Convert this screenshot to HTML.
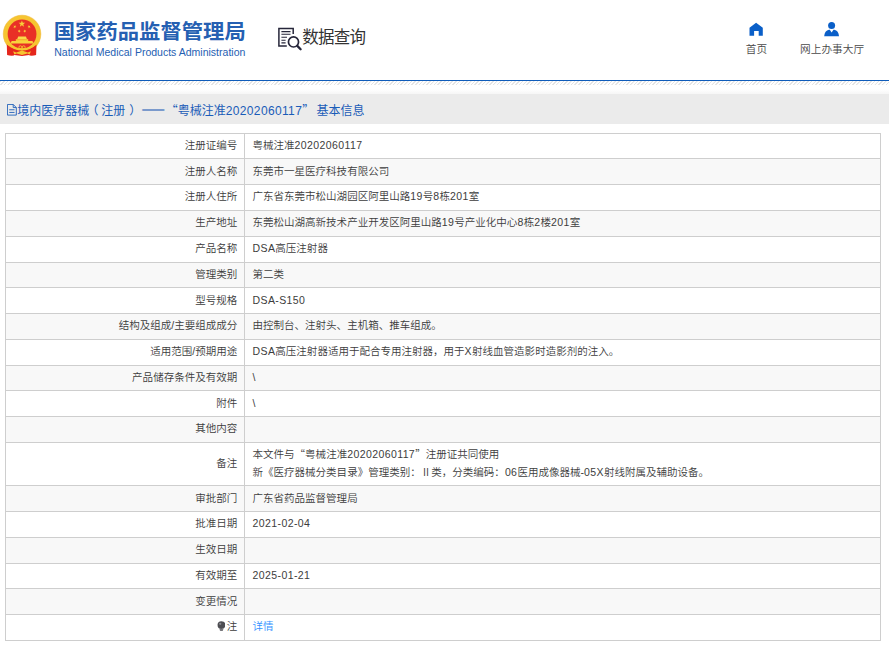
<!DOCTYPE html>
<html lang="zh-CN">
<head>
<meta charset="utf-8">
<title>数据查询</title>
<style>
html,body{margin:0;padding:0;width:889px;height:650px;overflow:hidden;background:#fff;}
#wrap{width:1000px;height:732px;zoom:0.889;position:relative;background:#fff;
 font-family:"Liberation Sans","Noto Sans CJK SC",sans-serif;font-size:12px;color:#333;}
#hdr{position:absolute;left:0;top:0;width:1000px;height:89.9px;border-bottom:1px solid #0f5cba;box-sizing:content-box;}
#t1{position:absolute;left:60.5px;top:19.9px;transform:scaleY(0.955);transform-origin:50% 86%;font-size:24px;line-height:32px;font-weight:bold;color:#2560b2;white-space:nowrap;letter-spacing:0;}
#t2{position:absolute;left:61px;top:50.3px;font-size:11.85px;line-height:16px;color:#2560b2;white-space:nowrap;}
#q{position:absolute;left:313px;top:26px;height:32px;white-space:nowrap;}
#q span{position:absolute;left:27px;top:0.6px;font-size:18.6px;line-height:32px;color:#333;letter-spacing:-0.9px}
.nav{position:absolute;top:47.5px;text-align:center;font-size:12px;line-height:16px;color:#484848;font-weight:350;white-space:nowrap;}
#hatch{position:absolute;left:0;top:81px;width:889px;height:4px;z-index:4;
 background:repeating-linear-gradient(135deg,#e4e4e4 0,#e4e4e4 0.9px,#fff 1.1px,#fff 2.5px,#e4e4e4 2.62px);}
#fade{position:absolute;left:0;top:100px;width:1000px;height:6px;background:linear-gradient(#fff,#f6f6f6);}
#bar{position:absolute;left:0;top:105.75px;width:1000px;height:33.25px;background:#ebebeb;}
#bar span{position:absolute;left:19.5px;top:3.3px;line-height:33px;font-size:13.5px;color:#1a5cb8;white-space:nowrap;}
#bar i{font-style:normal}#bar b{font-weight:normal;letter-spacing:0.4px}#bar u{text-decoration:none;margin-left:2.6px}
#bar svg{position:absolute;left:7.8px;top:11.4px;}
table{position:absolute;left:5.8px;top:149.3px;width:985.2px;border-collapse:collapse;table-layout:fixed;}
td{border:1px solid #cecece;height:19.875px;line-height:19.875px;padding:3.6px 8px 4.4px 8px;font-size:11.85px;color:#3c3c3c;font-weight:350;vertical-align:middle;overflow:hidden;white-space:nowrap;}
td.l{width:252px;text-align:right;}
tr:nth-child(even) td{background:#f8f8f8;}
a{color:#3391ff;text-decoration:none;}
.n{letter-spacing:0.45px}
.cq{font-family:"Noto Sans CJK SC",sans-serif;line-height:0;}
</style>
</head>
<body>
<svg id="icons" width="889" height="90" viewBox="0 0 889 90" style="position:absolute;left:0;top:0;z-index:5;">
<g id="emblem">
  <circle cx="22.05" cy="34" r="18.8" fill="#f6c531" stroke="#efb22a" stroke-width="0.5"/>
  <circle cx="22.05" cy="34" r="14.4" fill="#e93026"/>
  <path d="M6.8 44.4 L7.1 55 Q10.5 56.1 13.9 55.6 L14.2 55 L22 55.9 L29.2 55 L29.6 55.6 Q33 56.1 36.1 55 L36.5 44.4 Q30 50.4 22.05 50.4 Q13.8 50.4 6.8 44.4 Z" fill="#e5261c"/>
  <path d="M8.2 43.9 Q14.6 49.4 22.05 49.4 Q29.5 49.4 35.9 43.9" stroke="#f6c531" stroke-width="1.7" fill="none"/>
  <polygon points="17.1,39.3 18.2,36.4 25.9,36.4 27,39.3" fill="#f9d94a"/>
  <rect x="15.8" y="39.2" width="12.4" height="2" fill="#f7c934"/>
  <polygon points="10.6,43.6 11.6,41.1 32.5,41.1 33.5,43.6" fill="#f9d33c"/>
  <polygon points="21.90,20.40 22.76,22.71 25.23,22.82 23.30,24.35 23.96,26.73 21.90,25.37 19.84,26.73 20.50,24.35 18.57,22.82 21.04,22.71" fill="#f8cf3a"/>
  <polygon points="15.65,25.23 15.45,26.41 16.46,27.05 15.28,27.23 14.98,28.39 14.44,27.32 13.25,27.39 14.10,26.55 13.66,25.44 14.73,25.99" fill="#f8cf3a"/>
  <polygon points="28.25,25.23 29.17,25.99 30.24,25.44 29.80,26.55 30.65,27.39 29.46,27.32 28.92,28.39 28.62,27.23 27.44,27.05 28.45,26.41" fill="#f8cf3a"/>
  <polygon points="19.64,29.46 19.75,30.65 20.90,31.01 19.80,31.49 19.81,32.69 19.02,31.79 17.88,32.17 18.49,31.14 17.77,30.17 18.94,30.43" fill="#f8cf3a"/>
  <polygon points="24.26,29.46 24.96,30.43 26.13,30.17 25.41,31.14 26.02,32.17 24.88,31.79 24.09,32.69 24.10,31.49 23.00,31.01 24.15,30.65" fill="#f8cf3a"/>
  <circle cx="20.4" cy="47.3" r="1.5" fill="none" stroke="#f6c531" stroke-width="0.9"/>
  <circle cx="23.7" cy="47.3" r="1.5" fill="none" stroke="#f6c531" stroke-width="0.9"/>
  <path d="M13.1 51.3 L16.2 52.4 L19.2 51.4 L22 50.6 L24.8 51.4 L27.8 52.4 L30.9 51.3 L29.6 54.6 L27.4 53.5 L24.6 54.3 L22 55 L19.4 54.3 L16.6 53.5 L14.4 54.6 Z" fill="#f6c531"/>
 </g>
 <g transform="translate(274 22)" fill="none" stroke="#26263a">
  <path d="M12.8 24.1 H4.9 V6.4 H19.2 V12" stroke-width="1.5"/>
  <path d="M7.4 9.6 H16.5 M7.4 12.3 H16.5 M7.4 15.3 H13 M7.4 18.2 H11.6 M7.4 20.9 H11.6" stroke-width="1.1"/>
  <circle cx="19.5" cy="19.95" r="5.05" stroke-width="1.7"/>
  <path d="M23.3 23.9 L26.6 27.2" stroke-width="2.3" stroke-linecap="round"/>
 </g>
 <polygon fill="#0a5fc8" points="756.1,22.7 762.8,27.8 762.8,35.8 758.7,35.8 758.7,31 754.1,31 754.1,35.8 749.5,35.8 749.5,27.8"/>
 <circle cx="831.6" cy="25.46" r="3.5" fill="#0a5fc8"/>
 <path fill="#0a5fc8" d="M824.2 36.3 Q824.6 30.5 829 29.8 L829.8 29.8 L831.6 32.6 L833.5 29.8 L834.3 29.8 Q838.6 30.5 839 36.3 Z"/>
</svg>
<div id="hatch"></div>
<div id="wrap">
 <div id="hdr">
  <div id="t1">国家药品监督管理局</div>
  <div id="t2">National Medical Products Administration</div>
  <div id="q">
   <span>数据查询</span>
  </div>
  <div class="nav" style="left:838px;width:26px;">
   首页
  </div>
  <div class="nav" style="left:899px;width:74px;">
   网上办事大厅
  </div>
 </div>
 <div id="fade"></div>
 <div id="bar">
  <svg width="11" height="13" viewBox="0 0 11 13" fill="none" stroke="#1a5cb8" stroke-width="1"><path d="M0.5 0.5 H7 L10.5 4 V12.5 H0.5 Z M7 0.5 V4 H10.5 M2.5 6.5 H8.5 M2.5 9.5 H8.5"/></svg>
  <span>境内医疗器械<i style="position:relative;left:-3.2px">（</i>注册<i style="position:relative;left:4.4px">）</i></span><span style="left:158.8px"><i class="cq" style="letter-spacing:0.6px;font-weight:bold;text-shadow:0 0.6px 0 #1a5cb8">——</i><i class="cq">“</i>粤械注准<b>20202060117</b><i class="cq">”</i><u>基本信息</u></span>
 </div>
 <table>
  <tr><td class="l">注册证编号</td><td>粤械注准<span class="n">20202060117</span></td></tr>
  <tr><td class="l">注册人名称</td><td>东莞市一星医疗科技有限公司</td></tr>
  <tr><td class="l">注册人住所</td><td>广东省东莞市松山湖园区阿里山路<span class="n">19</span>号<span class="n">8</span>栋<span class="n">201</span>室</td></tr>
  <tr><td class="l">生产地址</td><td>东莞松山湖高新技术产业开发区阿里山路<span class="n">19</span>号产业化中心<span class="n">8</span>栋<span class="n">2</span>楼<span class="n">201</span>室</td></tr>
  <tr><td class="l">产品名称</td><td><span class="n">DSA</span>高压注射器</td></tr>
  <tr><td class="l">管理类别</td><td>第二类</td></tr>
  <tr><td class="l">型号规格</td><td><span class="n">DSA-S150</span></td></tr>
  <tr><td class="l">结构及组成/主要组成成分</td><td>由控制台、注射头、主机箱、推车组成。</td></tr>
  <tr><td class="l">适用范围/预期用途</td><td><span class="n">DSA</span>高压注射器适用于配合专用注射器，用于<span class="n">X</span>射线血管造影时造影剂的注入。</td></tr>
  <tr><td class="l">产品储存条件及有效期</td><td>\</td></tr>
  <tr><td class="l">附件</td><td>\</td></tr>
  <tr><td class="l">其他内容</td><td></td></tr>
  <tr><td class="l">备注</td><td>本文件与<span class="cq">“</span>粤械注准<span class="n">20202060117</span><span class="cq">”</span>注册证共同使用<br>新《医疗器械分类目录》管理类别：Ⅱ类，分类编码：<span class="n">06</span>医用成像器械-<span class="n">05X</span>射线附属及辅助设备。</td></tr>
  <tr><td class="l">审批部门</td><td>广东省药品监督管理局</td></tr>
  <tr><td class="l">批准日期</td><td><span class="n">2021-02-04</span></td></tr>
  <tr><td class="l">生效日期</td><td></td></tr>
  <tr><td class="l">有效期至</td><td><span class="n">2025-01-21</span></td></tr>
  <tr><td class="l">变更情况</td><td></td></tr>
  <tr><td class="l"><svg width="10" height="11.5" viewBox="0 0 10 11.5" style="vertical-align:-1.5px;margin-right:1.5px"><circle cx="5" cy="4.6" r="4.4" fill="#4d4d52"/><circle cx="3.6" cy="3.2" r="1.3" fill="#8a8a90"/><rect x="3.2" y="8.6" width="3.6" height="2.6" rx="0.8" fill="#77777c"/></svg>注</td><td><a>详情</a></td></tr>
 </table>
</div>
</body>
</html>
